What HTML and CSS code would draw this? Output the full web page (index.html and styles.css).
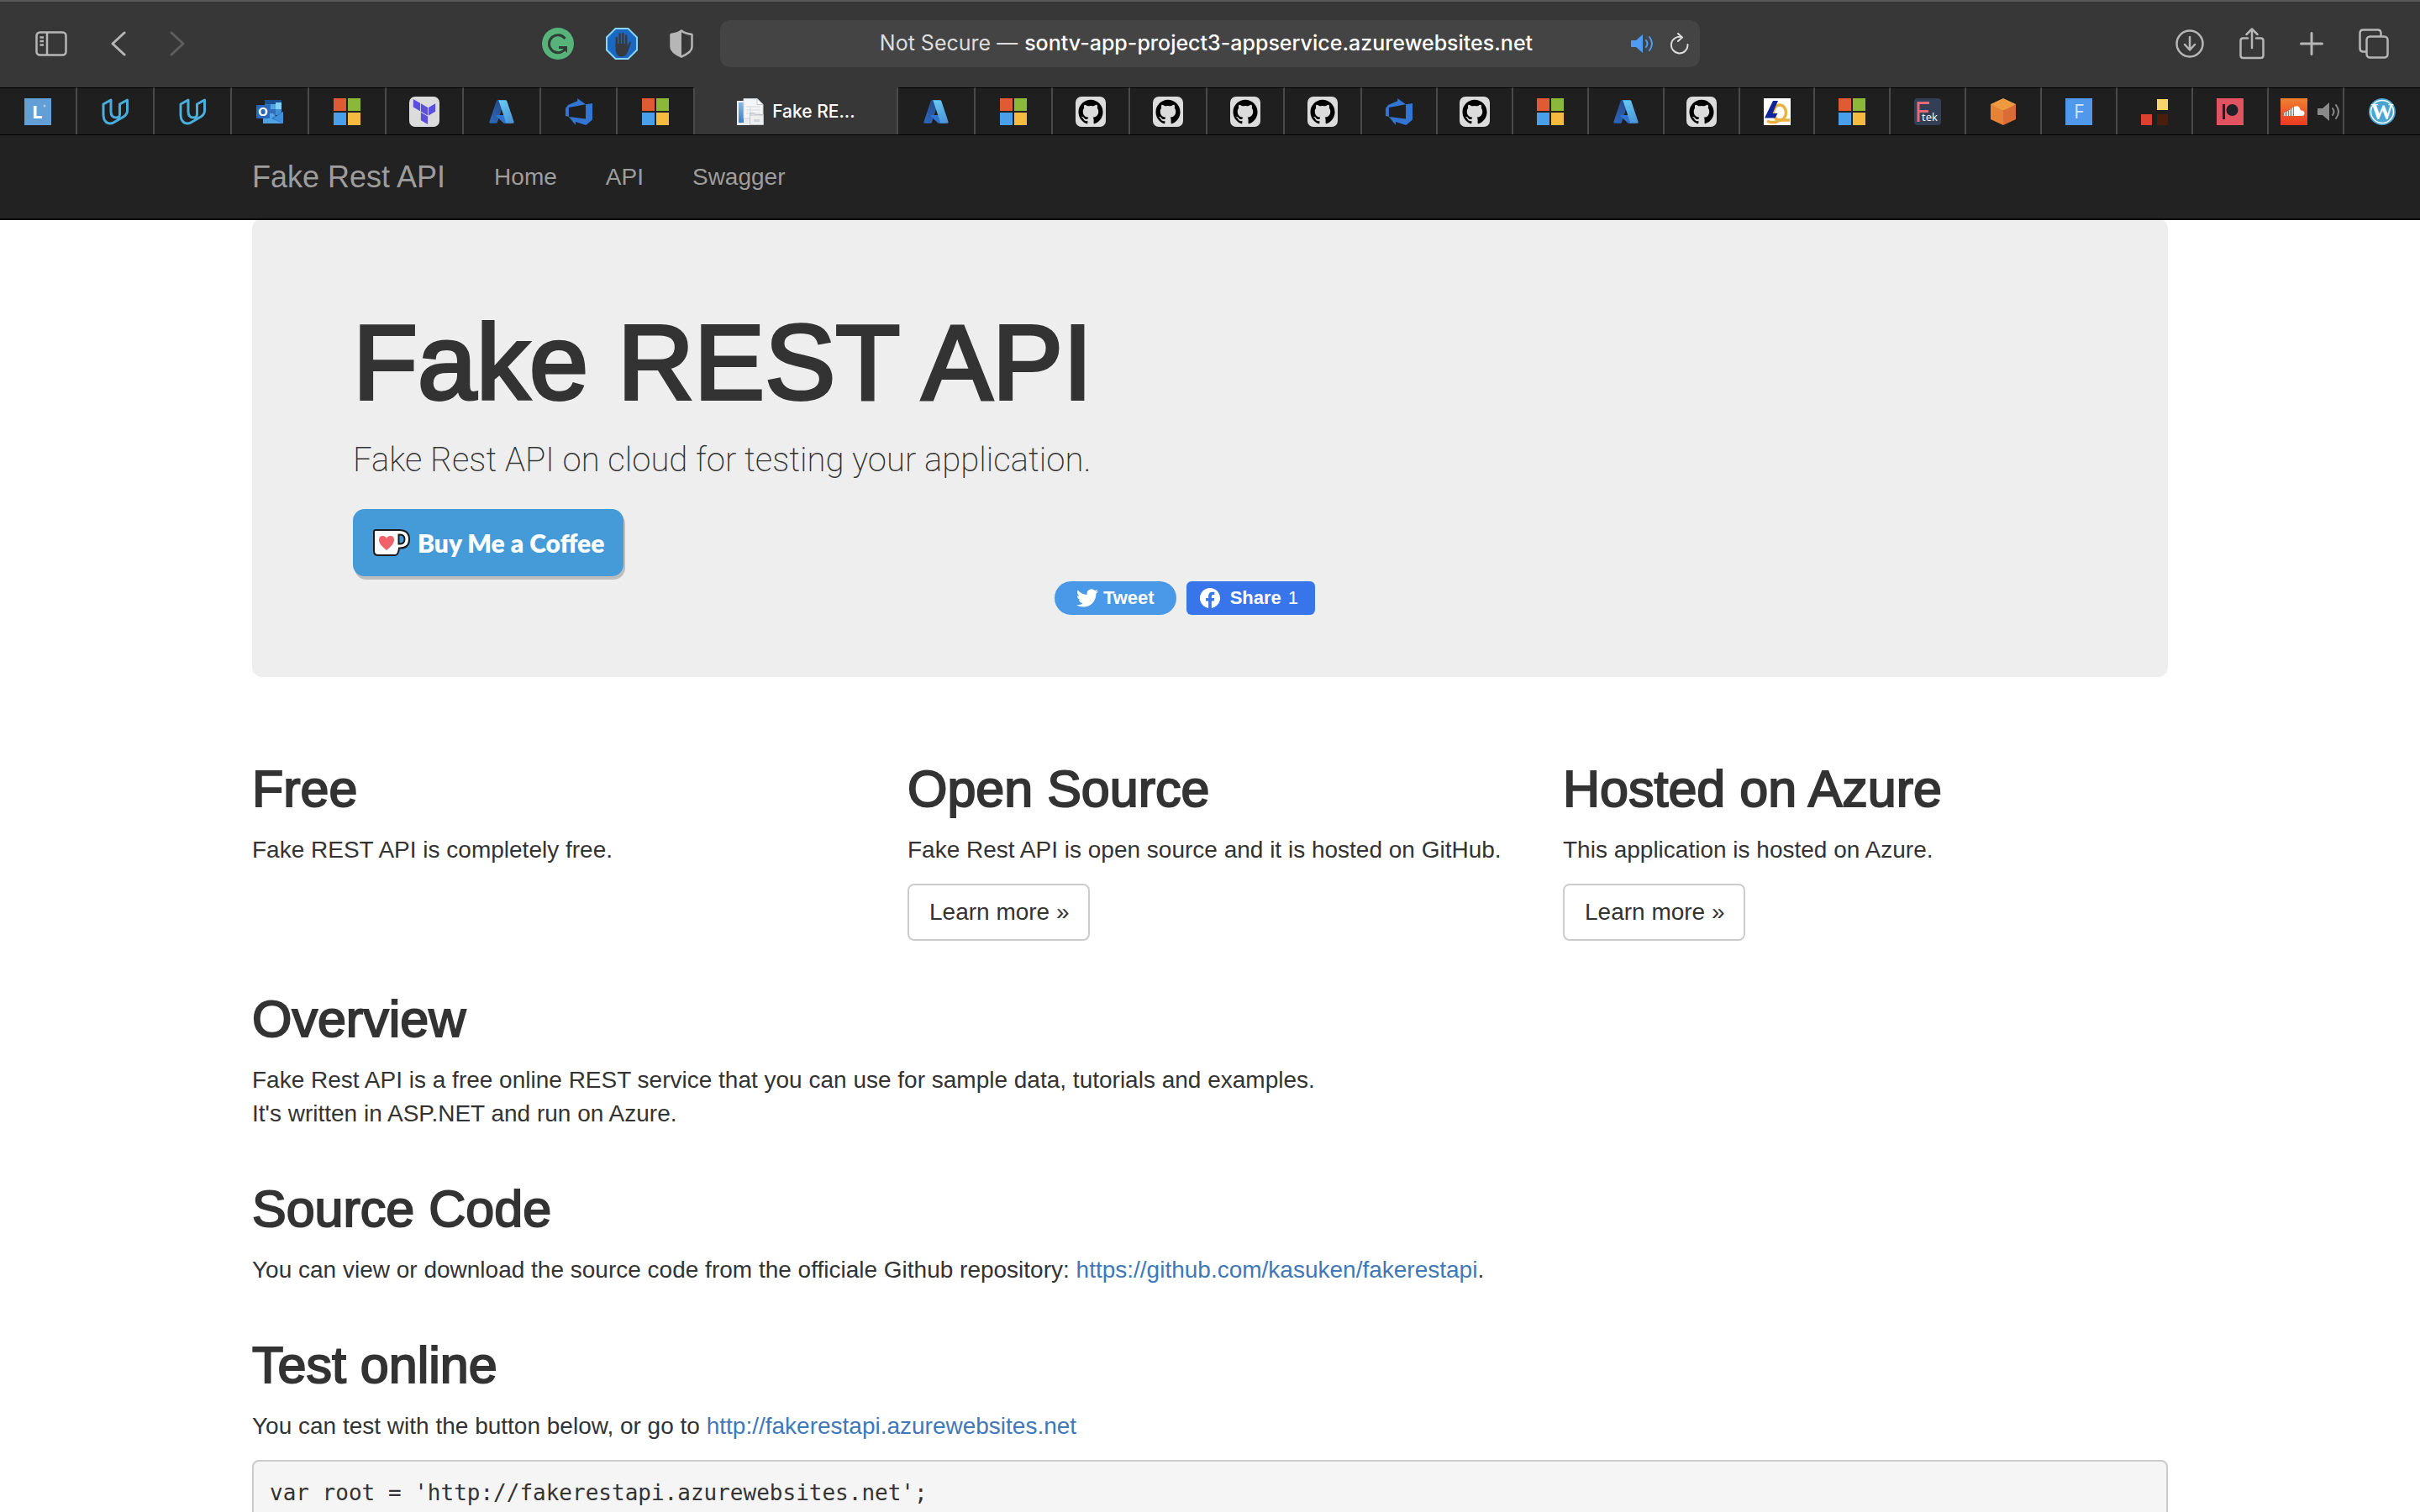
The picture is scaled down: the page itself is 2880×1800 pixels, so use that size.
FILE: index.html
```html
<!DOCTYPE html>
<html lang="en">
<head>
<meta charset="utf-8">
<title>Fake Rest API</title>
<link rel="stylesheet" href="styles.css">
</head>
<body>
<svg class="sprite" aria-hidden="true">
  <defs>
    <linearGradient id="az-left" x1="0.8" y1="0" x2="0.2" y2="1"><stop offset="0" stop-color="#274a86"/><stop offset="1" stop-color="#2c66bb"/></linearGradient>
    <linearGradient id="az-right" x1="0.3" y1="0" x2="0.7" y2="1"><stop offset="0" stop-color="#66c8f0"/><stop offset="1" stop-color="#4a94dc"/></linearGradient>
    <linearGradient id="sc-bg" x1="0" y1="0" x2="0" y2="1"><stop offset="0" stop-color="#ef8031"/><stop offset="1" stop-color="#ea3a23"/></linearGradient>
    <linearGradient id="doc-blue" x1="0" y1="0" x2="0" y2="1"><stop offset="0" stop-color="#8ab8e0"/><stop offset="1" stop-color="#3e7fc4"/></linearGradient>
  </defs>
  <symbol id="windows" viewBox="0 0 32 32">
    <path fill="#e05b34" d="M0 0h15v15H0z"/><path fill="#8bb838" d="M17 0h15v15H17z"/><path fill="#4a9fea" d="M0 17h15v15H0z"/><path fill="#f5bb40" d="M17 17h15v15H17z"/>
  </symbol>
  <symbol id="udacity" viewBox="0 0 32 32">
    <path fill="none" stroke="#4aaedd" stroke-width="3" stroke-linejoin="round" d="M11 2 2 7v13c0 6 3.500 10 8 10 1.500 0 3-.4 4-1l12-7c3-2 4.500-4 4.500-7V2l-9 5v12c0 2.500-1.500 4-4 4-4.500 0-6.500-3-6.500-7z"/>
  </symbol>
  <symbol id="azure" viewBox="0 0 96 96">
    <path fill="url(#az-left)" d="M33.338 6.544h26.038l-27.03 80.087a4.152 4.152 0 0 1-3.933 2.824H8.149a4.145 4.145 0 0 1-3.928-5.47L29.404 9.368a4.152 4.152 0 0 1 3.934-2.825z"/>
    <path fill="#2f74cf" d="M71.175 60.261h-41.29a1.911 1.911 0 0 0-1.305 3.309l26.532 24.764a4.171 4.171 0 0 0 2.846 1.121h23.38z"/>
    <path fill="url(#az-right)" d="M66.595 9.364a4.145 4.145 0 0 0-3.928-2.82H33.648a4.146 4.146 0 0 1 3.928 2.82l25.184 74.62a4.146 4.146 0 0 1-3.928 5.472h29.02a4.146 4.146 0 0 0 3.927-5.472z"/>
  </symbol>
  <symbol id="devops" viewBox="0 0 24 24">
    <path fill="#3275d3" d="M0 8.877 2.247 5.910l8.405-3.416V.022l7.370 5.393L2.966 8.338v8.225L0 15.707zm24-4.450v14.651l-5.753 4.900-9.303-3.057v3.056l-5.978-7.416 15.057 1.798V5.415z"/>
  </symbol>
  <symbol id="github" viewBox="0 0 36 36">
    <rect width="36" height="36" rx="7" fill="#dcdcdc"/>
    <path transform="translate(3.500 3.500) scale(1.210)" d="M12 .297c-6.630 0-12 5.373-12 12 0 5.303 3.438 9.800 8.205 11.385.600.113.820-.258.820-.577 0-.285-.010-1.040-.015-2.040-3.338.724-4.042-1.610-4.042-1.610C4.422 18.070 3.633 17.700 3.633 17.700c-1.087-.744.084-.729.084-.729 1.205.084 1.838 1.236 1.838 1.236 1.070 1.835 2.809 1.305 3.495.998.108-.776.417-1.305.760-1.605-2.665-.300-5.466-1.332-5.466-5.930 0-1.310.465-2.380 1.235-3.220-.135-.303-.540-1.523.105-3.176 0 0 1.005-.322 3.300 1.230.960-.267 1.980-.399 3-.405 1.020.006 2.040.138 3 .405 2.280-1.552 3.285-1.230 3.285-1.230.645 1.653.240 2.873.120 3.176.765.840 1.230 1.910 1.230 3.220 0 4.610-2.805 5.625-5.475 5.920.420.360.810 1.096.810 2.220 0 1.606-.015 2.896-.015 3.286 0 .315.210.690.825.570C20.565 22.092 24 17.592 24 12.297c0-6.627-5.373-12-12-12"/>
  </symbol>
  <symbol id="speaker" viewBox="0 0 28 28">
    <path fill="currentColor" d="M1 10h5l8-7v22l-8-7H1q-1 0-1-1v-6q0-1 1-1z"/>
    <path fill="none" stroke="currentColor" stroke-width="2" stroke-linecap="round" d="M18 10q3 4 0 8M22 6q6 8 0 16"/>
  </symbol>
</svg>

<header class="browser">
  <div class="toolbar">
    <div class="toolbar-group">
      <button class="tool" aria-label="Show sidebar"><svg width="38" height="30" viewBox="0 0 38 30" fill="none" stroke="#b6b6b6" stroke-width="2.500"><rect x="1.500" y="1.500" width="35" height="27" rx="4"/><path d="M14 1v28M5.500 7.500h4.500M5.500 12h4.500M5.500 16.500h4.500"/></svg></button>
      <button class="tool tool-back" aria-label="Back"><svg width="18" height="30" viewBox="0 0 18 30" fill="none" stroke="#b6b6b6" stroke-width="3" stroke-linecap="round" stroke-linejoin="round"><path d="M16 2 2 15l14 13"/></svg></button>
      <button class="tool tool-forward" aria-label="Forward" disabled><svg width="18" height="30" viewBox="0 0 18 30" fill="none" stroke="#5e5e5e" stroke-width="3" stroke-linecap="round" stroke-linejoin="round"><path d="m2 2 14 13L2 28"/></svg></button>
      <div class="extensions">
        <button class="tool" aria-label="Grammarly"><svg width="38" height="38" viewBox="0 0 38 38"><circle cx="19" cy="19" r="19" fill="#56b37a"/><path fill="none" stroke="#2f3f36" stroke-width="3" d="M27.500 13a10.500 10.500 0 1 0-1 13.500V24M20 23.500h9"/><path fill="#2f3f36" d="M22 22h8v8z"/></svg></button>
        <button class="tool" aria-label="AdBlock"><svg width="38" height="38" viewBox="0 0 38 38"><path d="M11.500 1h15L37 11.500v15L26.500 37h-15L1 26.500v-15z" fill="#1a67c4" stroke="#8ad6f8" stroke-width="2"/><path fill="none" stroke="#373a3e" stroke-width="2.400" stroke-linecap="round" d="M12.800 22v-10M16.600 20V7.500M20.400 20V7M24.200 22V9.500"/><path fill="#373a3e" d="M11.600 19h13.800v4l2-5q1.500-2.500 2.500-.5-1.500 5-3.500 10-2 7-7.400 7-7.400 0-7.400-9z"/></svg></button>
        <button class="tool" aria-label="Privacy report"><svg width="28" height="34" viewBox="0 0 28 34"><path fill="none" stroke="#b6b6b6" stroke-width="2.500" stroke-linejoin="round" d="M14 1.500Q18 5 26.500 6v15q0 6-12.500 11.500Q1.500 27 1.500 21V6Q10 5 14 1.500z"/><path fill="#b6b6b6" d="M14 1v31.500Q1.500 27 1.500 21V6Q10 5 14 1z"/></svg></button>
      </div>
    </div>
    <div class="address">
      <div class="address-text">
        <label for="url">Not Secure —</label>
        <input id="url" class="address-input" type="text" value="sontv-app-project3-appservice.azurewebsites.net">
      </div>
      <div class="address-tools">
        <button class="tool tool-audio" aria-label="Mute this tab"><svg width="28" height="28"><use href="#speaker"/></svg></button>
        <button class="tool" aria-label="Reload"><svg width="24" height="26" viewBox="0 0 24 26" fill="none" stroke="#dcdcdc" stroke-width="2" stroke-linecap="round" stroke-linejoin="round"><path d="M14.500 5.200A9.800 9.800 0 1 0 21.500 14M10 1l5 4.500-5 4.500"/></svg></button>
      </div>
    </div>
    <div class="toolbar-group toolbar-end">
      <button class="tool" aria-label="Downloads"><svg width="34" height="34" viewBox="0 0 34 34" fill="none" stroke="#b6b6b6" stroke-width="2.500" stroke-linecap="round" stroke-linejoin="round"><circle cx="17" cy="17" r="15.500"/><path d="M17 9v15m-6-6 6 6.500 6-6.500"/></svg></button>
      <button class="tool" aria-label="Share"><svg width="30" height="38" viewBox="0 0 30 38" fill="none" stroke="#b6b6b6" stroke-width="2.500" stroke-linecap="round" stroke-linejoin="round"><path d="M10 12.500H4.500q-3 0-3 3V33q0 3 3 3h21q3 0 3-3V15.500q0-3-3-3H20M15 24V2M8.500 8 15 1.500 21.500 8"/></svg></button>
      <button class="tool" aria-label="New tab"><svg width="28" height="28" viewBox="0 0 28 28" stroke="#b6b6b6" stroke-width="3" stroke-linecap="round"><path d="M14 1.500v25M1.500 14h25"/></svg></button>
      <button class="tool" aria-label="Show all tabs"><svg width="36" height="36" viewBox="0 0 36 36" fill="none" stroke="#b6b6b6" stroke-width="2.500"><rect x="9.500" y="9.500" width="25" height="25" rx="4"/><path d="M9 27.500H5.500q-4 0-4-4v-18q0-4 4-4h17q4 0 4 4V9"/></svg></button>
    </div>
  </div>

  <div class="tabs">
    <button class="tab" aria-label="L"><svg width="32" height="32" viewBox="0 0 32 32"><path fill="#629fd6" d="M0 0h32v32H0z"/><text x="9" y="24" font-size="22" class="glyph-bold" fill="#fff">L</text><circle cx="24" cy="9" r="1.500" fill="#a9cbea"/></svg></button>
    <button class="tab" aria-label="Udacity"><svg width="34" height="32"><use href="#udacity"/></svg></button>
    <button class="tab" aria-label="Udacity classroom"><svg width="34" height="32"><use href="#udacity"/></svg></button>
    <button class="tab" aria-label="Outlook"><svg width="32" height="32" viewBox="0 0 32 32"><path fill="#1c4f91" d="M10 2h20v6H10z"/><path fill="#2f77c6" d="M10 7h7v11h-7z"/><path fill="#4fa3e3" d="M17 7h6v6h-6z"/><path fill="#7fd3fa" d="M23 5h7v8h-7z"/><path fill="#2f6fba" d="M17 13h6v7h-6z"/><path fill="#3e8fd6" d="M23 13h7v7h-7z"/><path fill="#4fa3e3" d="M8 18h12l12 12H8z"/><path fill="#2566ae" d="m32 16-14 8 14 6z"/><path fill="#3f8fdc" d="m32 16-12 8 12 6z"/><rect y="8" width="16" height="16" rx="1" fill="#2b68bd"/><text x="8" y="21" font-size="15" text-anchor="middle" class="glyph-bold" fill="#fff">O</text></svg></button>
    <button class="tab" aria-label="Microsoft"><svg width="32" height="32"><use href="#windows"/></svg></button>
    <button class="tab" aria-label="Terraform"><svg width="36" height="36" viewBox="0 0 36 36"><rect width="36" height="36" rx="7" fill="#dcdcdc"/><path fill="#5b4fdb" transform="translate(3 3) scale(1.250)" d="M1.440 0v7.575l6.561 3.790V3.787zm21.120 4.227-6.561 3.791v7.574l6.560-3.787zM8.720 4.230v7.575l6.561 3.787V8.018zm0 8.405v7.575L15.280 24v-7.578z"/></svg></button>
    <button class="tab" aria-label="Azure"><svg width="32" height="32"><use href="#azure"/></svg></button>
    <button class="tab" aria-label="Azure DevOps"><svg width="32" height="32"><use href="#devops"/></svg></button>
    <button class="tab" aria-label="Microsoft"><svg width="32" height="32"><use href="#windows"/></svg></button>
    <button class="tab tab-active"><svg width="32" height="32" viewBox="0 0 32 32"><path fill="#e9edf1" d="M0 3h20v29H0z"/><path fill="url(#doc-blue)" d="M2 5h6v24H2z"/><path fill="#f4f5f6" stroke="#cfd3d7" d="M8 .5h16l7 7V24H8z"/><path fill="#fff" stroke="#c4c8cc" d="m24 .5 7 7h-7z"/><path fill="none" stroke="#d5d9dd" d="M11 10h17M11 14h17M11 18h17M16 10v13"/><path fill="#d9dcdf" stroke="#bfc3c7" d="M15.500 17.500h5l1 2h10v12h-16z"/><path fill="#eceef0" d="M16 21h15v10H16z"/><path fill="#d0d4d8" d="M20 25h7v3h-7z"/></svg><span>Fake RE...</span></button>
    <button class="tab" aria-label="Azure"><svg width="32" height="32"><use href="#azure"/></svg></button>
    <button class="tab" aria-label="Microsoft"><svg width="32" height="32"><use href="#windows"/></svg></button>
    <button class="tab" aria-label="GitHub"><svg width="36" height="36"><use href="#github"/></svg></button>
    <button class="tab" aria-label="GitHub"><svg width="36" height="36"><use href="#github"/></svg></button>
    <button class="tab" aria-label="GitHub"><svg width="36" height="36"><use href="#github"/></svg></button>
    <button class="tab" aria-label="GitHub"><svg width="36" height="36"><use href="#github"/></svg></button>
    <button class="tab" aria-label="Azure DevOps"><svg width="32" height="32"><use href="#devops"/></svg></button>
    <button class="tab" aria-label="GitHub"><svg width="36" height="36"><use href="#github"/></svg></button>
    <button class="tab" aria-label="Microsoft"><svg width="32" height="32"><use href="#windows"/></svg></button>
    <button class="tab" aria-label="Azure"><svg width="32" height="32"><use href="#azure"/></svg></button>
    <button class="tab" aria-label="GitHub"><svg width="36" height="36"><use href="#github"/></svg></button>
    <button class="tab" aria-label="LQ"><svg width="32" height="32" viewBox="0 0 32 32"><path fill="#fff" d="M0 0h32v32H0z"/><ellipse cx="19" cy="17" rx="7.500" ry="9" fill="none" stroke="#e9b142" stroke-width="3.500"/><path fill="none" stroke="#e9b142" stroke-width="3.500" d="M4 27q8 4 15-1h12"/><path fill="#10259a" d="M11 3h6l-6.500 15h6l-3 5.500H1z"/></svg></button>
    <button class="tab" aria-label="Microsoft"><svg width="32" height="32"><use href="#windows"/></svg></button>
    <button class="tab" aria-label="Ftek"><svg width="32" height="32" viewBox="0 0 32 32"><rect width="32" height="32" rx="4" fill="#323f55"/><path fill="none" stroke="#ea6a78" stroke-width="3" d="M5 28V5.500h13M5 15.500h12"/><text x="9" y="27" font-size="13" class="glyph" fill="#fff">tek</text></svg></button>
    <button class="tab" aria-label="Cube"><svg width="32" height="32" viewBox="0 0 32 32"><path fill="#ee9a43" d="M16 0 31 7v2L16 15 1 9V7z"/><path fill="#e48338" d="m1 7 15 8v17L1 25z"/><path fill="#dc6b35" d="m31 7-15 8v17l15-7z"/></svg></button>
    <button class="tab" aria-label="F"><svg width="32" height="32" viewBox="0 0 32 32"><path fill="#4f98ec" d="M0 0h32v32H0z"/><text x="10" y="24" font-size="23" class="glyph" fill="#d3e6fb">F</text></svg></button>
    <button class="tab" aria-label="Blocks"><svg width="32" height="32" viewBox="0 0 32 32"><path fill="#f8d46d" d="M19 1h13v13H19z"/><path fill="#dc4130" d="M0 19h13v13H0z"/><path fill="#4b1d0c" d="M19 19h13v13H19z"/></svg></button>
    <button class="tab" aria-label="Patreon"><svg width="32" height="32" viewBox="0 0 32 32"><path fill="#e15361" d="M0 0h32v32H0z"/><path fill="#1e2226" d="M7 7h3v18H7z"/><circle cx="18.500" cy="14" r="7" fill="#1e2226"/></svg></button>
    <button class="tab tab-playing" aria-label="SoundCloud"><svg width="32" height="32" viewBox="0 0 32 32"><path fill="url(#sc-bg)" d="M0 0h32v32H0z"/><path stroke="#fff" stroke-width="1" d="M4.500 17v4M6.500 16v5M8.500 15.500v5.500M10.500 14v7M12.500 12.500v8.500M14.500 11v10"/><path fill="#fff" d="M16 10q6-3 8 4.500 4.500-.5 4.500 3.500 0 3-3 3H16z"/></svg><svg width="28" height="28"><use href="#speaker"/></svg></button>
    <button class="tab" aria-label="WordPress"><svg width="32" height="32" viewBox="0 0 32 32"><circle cx="16" cy="16" r="16" fill="#4aa5d2"/><circle cx="16" cy="16" r="13.500" fill="none" stroke="#fff" stroke-width="1.500"/><text x="16" y="25" font-size="27" text-anchor="middle" class="glyph-serif" fill="#fff">W</text></svg></button>
  </div>
</header>

<nav class="navbar">
  <div class="container nav-inner">
    <a class="brand" href="#">Fake Rest API</a>
    <a href="#home">Home</a>
    <a href="#api">API</a>
    <a href="#swagger">Swagger</a>
  </div>
</nav>

<main class="container">
  <section class="jumbotron">
    <h1>Fake REST API</h1>
    <p class="lead">Fake Rest API on cloud for testing your application.</p>
    <a class="coffee" href="#coffee">
      <svg width="46" height="32" viewBox="0 0 46 32"><path fill="#fff" stroke="#1a1a1a" stroke-width="2" d="M4 1h28q12 0 12 11t-12 10.500q-1 8.500-5 8.500H7q-5 0-5-5V3q0-2 2-2z"/><path fill="#459ad8" stroke="#1a1a1a" stroke-width="2" d="M31.500 6.500q7-.5 7 5.500t-7 5.500z"/><path fill="#f0616a" d="M17 25q-9-7-9-12 0-5 4.500-5Q16 8 17 11q1-3 4.500-3 4.500 0 4.500 5 0 5-9 12z"/></svg>
      <span>Buy Me a Coffee</span>
    </a>
    <div class="social">
      <a class="tweet" href="#tweet"><svg width="26" height="26" viewBox="0 0 24 24"><path fill="#fff" d="M23.953 4.570a10 10 0 0 1-2.825.775 4.958 4.958 0 0 0 2.163-2.723c-.951.555-2.005.959-3.127 1.184a4.920 4.920 0 0 0-8.384 4.482C7.690 8.095 4.067 6.130 1.640 3.162a4.822 4.822 0 0 0-.666 2.475c0 1.710.870 3.213 2.188 4.096a4.904 4.904 0 0 1-2.228-.616v.060a4.923 4.923 0 0 0 3.946 4.827 4.996 4.996 0 0 1-2.212.085 4.936 4.936 0 0 0 4.604 3.417 9.867 9.867 0 0 1-6.102 2.105c-.390 0-.779-.023-1.170-.067a13.995 13.995 0 0 0 7.557 2.209c9.053 0 13.998-7.496 13.998-13.985 0-.210 0-.420-.015-.630A9.935 9.935 0 0 0 24 4.590z"/></svg><span>Tweet</span></a>
      <a class="share" href="#share"><svg width="24" height="24" viewBox="0 0 24 24"><path fill="#fff" d="M24 12.073c0-6.627-5.373-12-12-12s-12 5.373-12 12c0 5.990 4.388 10.954 10.125 11.854v-8.385H7.078v-3.470h3.047V9.430c0-3.007 1.792-4.669 4.533-4.669 1.312 0 2.686.235 2.686.235v2.953H15.830c-1.491 0-1.956.925-1.956 1.874v2.250h3.328l-.532 3.470h-2.796v8.385C19.612 23.027 24 18.062 24 12.073z"/></svg><span class="share-label">Share</span><span class="share-count">1</span></a>
    </div>
  </section>

  <div class="columns">
    <section>
      <h2>Free</h2>
      <p>Fake REST API is completely free.</p>
    </section>
    <section>
      <h2>Open Source</h2>
      <p>Fake Rest API is open source and it is hosted on GitHub.</p>
      <a class="btn" href="#source">Learn more »</a>
    </section>
    <section>
      <h2>Hosted on Azure</h2>
      <p>This application is hosted on Azure.</p>
      <a class="btn" href="#azure-hosting">Learn more »</a>
    </section>
  </div>

  <section>
    <h2>Overview</h2>
    <p>Fake Rest API is a free online REST service that you can use for sample data, tutorials and examples.<br>It's written in ASP.NET and run on Azure.</p>
  </section>
  <section>
    <h2>Source Code</h2>
    <p>You can view or download the source code from the officiale Github repository: <a href="#repo">https://github.com/kasuken/fakerestapi</a>.</p>
  </section>
  <section>
    <h2>Test online</h2>
    <p>You can test with the button below, or go to <a href="#test">http://fakerestapi.azurewebsites.net</a></p>
    <pre>var root = 'http://fakerestapi.azurewebsites.net';</pre>
  </section>
</main>
</body>
</html>
```
FILE: styles.css
```css
* {
  box-sizing: border-box;
}

html {
  overflow-x: hidden;
  scrollbar-width: none;
}

body {
  margin: 0;
  background: #fff;
  color: #333;
  font-family: "Liberation Sans", Arial, sans-serif;
  font-size: 28px;
  line-height: 40px;
}

svg {
  display: block;
  flex: none;
}

.sprite {
  position: absolute;
  width: 0;
  height: 0;
}

a {
  color: #4078b8;
  text-decoration: none;
}

/* Browser chrome */
.browser {
  font-family: Inter, sans-serif;
}

.toolbar {
  display: grid;
  grid-template-columns: 1fr 1166px 1fr;
  gap: 32px;
  align-items: center;
  height: 104px;
  padding-bottom: 2px;
  border-top: 2px solid #5a5a5a;
  background: #373737;
}

.toolbar-group {
  display: flex;
  align-items: center;
  padding-left: 42px;
}

.toolbar-end {
  justify-content: flex-end;
  gap: 42px;
  padding: 0 37px 0 0;
}

.tool {
  padding: 0;
  border: 0;
  background: none;
}

.tool-back {
  margin-left: 52px;
}

.tool-forward {
  margin-left: 52px;
}

.extensions {
  display: flex;
  align-items: center;
  gap: 38px;
  margin-left: auto;
}

.address {
  display: grid;
  grid-template-columns: 1fr auto 1fr;
  align-items: center;
  height: 56px;
  padding: 0 12px;
  border-radius: 12px;
  background: #444;
  color: #ddd;
  font-size: 25px;
}

.address-text {
  display: flex;
  grid-column: 2;
  align-items: center;
  gap: 8px;
  padding-bottom: 2px;
}

.address-input {
  width: 614px;
  padding: 0;
  border: 0;
  background: none;
  color: #fff;
  font: inherit;
  font-weight: 500;
}

.address-tools {
  display: flex;
  align-items: center;
  justify-content: flex-end;
  gap: 18px;
}

.tool-audio {
  color: #4f9cf5;
}

.tabs {
  display: grid;
  grid-template-columns:
    repeat(9, minmax(0, 92fr)) minmax(0, 242fr)
    repeat(6, minmax(0, 92fr)) repeat(14, minmax(0, 90fr));
  height: 57px;
  border-bottom: 1px solid #000;
}

.tab {
  display: flex;
  align-items: center;
  justify-content: center;
  padding: 0;
  border: 0;
  border-top: 1px solid #000;
  border-right: 2px solid #4a4a4a;
  background: #1f1f1f;
}

.tab:last-child {
  border-right: 0;
}

.tab-active {
  gap: 10px;
  border-top-color: #373737;
  background: #373737;
  color: #fff;
  font-family: inherit;
  font-size: 21px;
  font-weight: 500;
}

.tab-playing {
  gap: 12px;
  padding-left: 12px;
  color: #8a8a8a;
}

.glyph {
  font-family: "Open Sans", sans-serif;
}

.glyph-bold {
  font-family: "Open Sans", sans-serif;
  font-weight: 700;
}

.glyph-serif {
  font-family: "Liberation Serif", serif;
  font-weight: 700;
}

/* Page */
.container {
  max-width: 2340px;
  margin: 0 auto;
  padding: 0 30px;
}

.navbar {
  position: relative;
  border-bottom: 2px solid #080808;
  background: #222;
}

.nav-inner {
  display: flex;
  align-items: center;
  gap: 58px;
  height: 99px;
}

.nav-inner a {
  color: #9d9d9d;
}

.nav-inner .brand {
  font-size: 36px;
}

.jumbotron {
  margin-top: -2px;
  padding: 104px 120px 74px;
  border-radius: 12px;
  background: #eee;
}

h1,
h2 {
  margin: 0;
  font-weight: 400;
  -webkit-text-stroke: 2px #333;
}

h1 {
  margin-bottom: 18px;
  font-size: 126px;
  line-height: 136px;
  -webkit-text-stroke-width: 4px;
}

h2 {
  padding-top: 40px;
  margin-bottom: 20px;
  font-size: 61px;
  line-height: 66px;
}

p {
  margin: 0 0 20px;
}

.lead {
  margin-bottom: 29px;
  font-family: Roboto, sans-serif;
  font-size: 40px;
  font-weight: 200;
  line-height: 59px;
}

.coffee {
  display: flex;
  align-items: center;
  gap: 8px;
  width: fit-content;
  height: 80px;
  margin-bottom: 6px;
  padding: 0 23px;
  border-radius: 14px;
  background: #459ad8;
  box-shadow: 2px 4px 0 rgba(0, 0, 0, 0.2);
  color: #fff;
  font-family: Lato, sans-serif;
  font-size: 30px;
  font-weight: 800;
}

.social {
  display: flex;
  justify-content: center;
  gap: 12px;
  padding-right: 60px;
  font-size: 22px;
}

.tweet,
.share {
  display: flex;
  align-items: center;
  height: 40px;
  color: #fff;
}

.tweet {
  gap: 6px;
  padding: 0 26px;
  border-radius: 20px;
  background: #4a98e8;
  font-weight: 700;
}

.share {
  padding: 0 20px 0 16px;
  border-radius: 6px;
  background: #3874ea;
}

.share-label {
  margin: 0 8px 0 12px;
  font-weight: 700;
}

.columns {
  display: grid;
  grid-template-columns: repeat(3, 1fr);
  gap: 60px;
  margin-top: 60px;
  padding-bottom: 20px;
}

.btn {
  display: inline-block;
  height: 68px;
  padding: 12px 22px 12px 24px;
  border: 2px solid #ccc;
  border-radius: 8px;
  background: #fff;
  color: #333;
}

.columns section {
  display: flex;
  flex-direction: column;
  align-items: flex-start;
}

pre {
  margin: 0 0 20px;
  padding: 19px;
  border: 2px solid #ccc;
  border-radius: 8px;
  background: #f5f5f5;
  font-family: "DejaVu Sans Mono", monospace;
  font-size: 26px;
  line-height: 37px;
}
```
